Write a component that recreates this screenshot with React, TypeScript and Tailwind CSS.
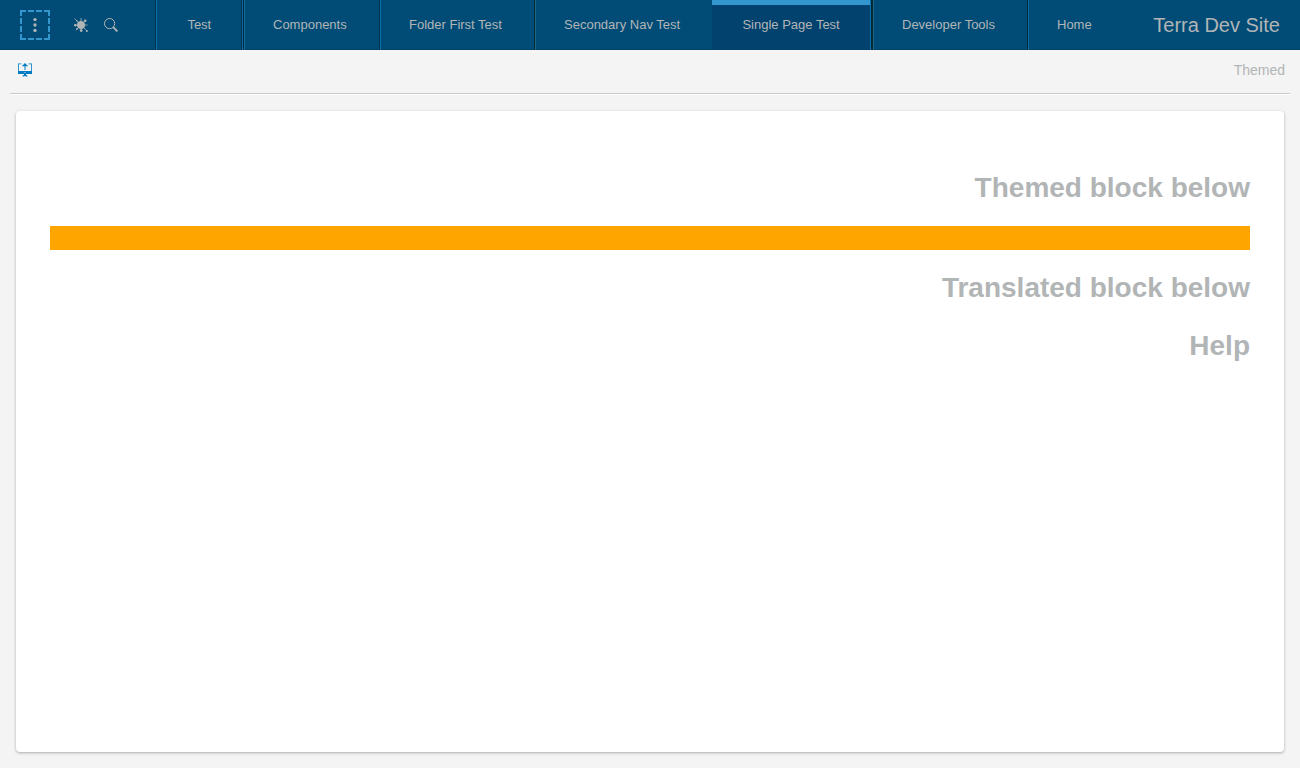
import React from 'react';

type Tab = { label: string; box: string; active?: boolean };

const tabs: Tab[] = [
  { label: 'Test', box: 'w-[87px] pl-[30.4px] border-l border-l-[#0f6ba3] border-r border-r-[#0f6ba3] shadow-[inset_-1px_0_0_#003452]' },
  { label: 'Components', box: 'w-[137px] pl-[29px] border-l border-l-[#002a42] shadow-[inset_1px_0_0_#0f6ba3] border-r border-r-[#003452]' },
  { label: 'Folder First Test', box: 'w-[155px] pl-[28px] border-l border-l-[#0f6ba3] border-r border-r-[#002a35]' },
  { label: 'Secondary Nav Test', box: 'w-[177px] pl-[28px] border-l border-l-[#1c6685]' },
  { label: 'Single Page Test', box: '', active: true },
  { label: 'Developer Tools', box: 'w-[155px] pl-[28px] border-l border-l-[#1c6685] border-r border-r-[#002a42]' },
  { label: 'Home', box: 'w-[95px] pl-[28px] border-l border-l-[#0f6ba3]' },
];

function BugIcon() {
  return (
    <svg className="ml-6 h-[14px] w-[14px]" viewBox="0 0 14 14" fill="#b2b5b6" stroke="#b2b5b6">
      <circle cx="7" cy="7" r="4" stroke="none" />
      <path d="M7 4V0M7 10v3M4 7H.5M10 7h3.500M4.500 4.500L.5 .5M9.500 4.500L11.500 2.500M4.500 9.500L2.500 11.500M9.500 9.500L13 13" strokeWidth=".8" fill="none" />
      <g stroke="none">
        <circle cx="11.2" cy="2.7" r="1.3" />
        <circle cx="1.3" cy="7.2" r="1.2" />
        <circle cx="7.2" cy="12.6" r="1.4" />
        <circle cx="12.9" cy="12.9" r="1" />
        <circle cx="2.8" cy="11.2" r="0.9" />
        <circle cx="2.8" cy="2.8" r="0.7" />
      </g>
    </svg>
  );
}

function SearchIcon() {
  return (
    <svg className="ml-4 h-[14px] w-[14px]" viewBox="0 0 14 14" fill="none" stroke="#b2b5b6">
      <circle cx="5.6" cy="5.6" r="5.1" strokeWidth="1" />
      <path d="M9.2 9.200l4.200 4.200" strokeWidth="1.9" />
    </svg>
  );
}

function ScreenIcon() {
  return (
    <svg className="ml-[18px] mt-[13px] h-[14px] w-[14px]" viewBox="0 0 14 14" fill="#007cc3">
      <path d="M0 .4h3.500v.8H.8V8h12.400V1.200h-2.700V.4H14V11H0z" />
      <path d="M7 0l3.200 3.200H7.500V7h-1V3.200H3.800z" />
      <circle cx="7" cy="9.5" r=".6" fill="#f4f4f4" />
      <path d="M6 11h2v.6L9.500 13v.6H8.200L7 12.900l-1.200.7H4.500V13L6 11.600z" />
    </svg>
  );
}

export default function App() {
  return (
    <div className="flex h-screen flex-col overflow-hidden bg-[#f4f4f4] font-['Liberation_Sans',Arial,sans-serif] text-[#b2b5b6]">
      <header className="flex h-[50px] shrink-0 bg-[#004c76] shadow-[inset_0_-1px_0_#00446e]">
        <div className="flex w-[156px] shrink-0 items-center border-r border-r-[#003452] pl-5">
          <button className="flex h-[30px] w-[30px] items-center justify-center" aria-label="Menu">
            <svg width="30" height="30" viewBox="0 0 30 30" fill="#b2b5b6">
              <path d="M0 1h6M8 1h6M16 1h6M24 1h6M0 29h6M8 29h6M16 29h6M24 29h6M1 0v6M1 8v6M1 16v6M1 24v6M29 0v6M29 8v6M29 16v6M29 24v6" stroke="#3496cf" strokeWidth="2" />
              <circle cx="15" cy="9.6" r="1.65" />
              <circle cx="15" cy="15" r="1.65" />
              <circle cx="15" cy="20.4" r="1.65" />
            </svg>
          </button>
          <BugIcon />
          <SearchIcon />
        </div>
        <nav className="flex shrink-0 text-[13px]">
          {tabs.map((tab) =>
            tab.active ? (
              <div key={tab.label} className="flex w-[161px] shrink-0">
                <div className="flex w-[158px] items-center border-t-[5px] border-t-[#3496cf] bg-[#02426e] pb-[5px] pl-[30.4px] whitespace-nowrap">
                  {tab.label}
                </div>
                <div className="w-px bg-[#0f6ba3]" />
                <div className="w-[2px] bg-[#002a35]" />
              </div>
            ) : (
              <div key={tab.label} className={`flex shrink-0 items-center whitespace-nowrap pb-px ${tab.box}`}>
                {tab.label}
              </div>
            ),
          )}
        </nav>
        <div className="flex flex-1 items-center justify-end pr-5 text-xl whitespace-nowrap">Terra Dev Site</div>
      </header>
      <div className="mx-[10px] flex h-[45px] shrink-0 justify-between border-b border-b-white shadow-[inset_0_-1px_0_#c8cacb]">
        <div className="-ml-[10px]">
          <ScreenIcon />
        </div>
        <span className="mr-[5px] mt-[10px] text-sm">Themed</span>
      </div>
      <main className="mx-4 mb-4 mt-4 flex-1 rounded bg-white px-[34px] pt-[59px] text-right shadow-[0_1px_3px_rgba(0,0,0,0.3)]">
        <h1 className="text-[28px] leading-9 font-bold">Themed block below</h1>
        <div className="mt-5 h-6 bg-[#ffa500]" />
        <h1 className="mt-5 text-[28px] leading-9 font-bold">Translated block below</h1>
        <h1 className="mt-[22px] text-[28px] leading-9 font-bold">Help</h1>
      </main>
    </div>
  );
}
